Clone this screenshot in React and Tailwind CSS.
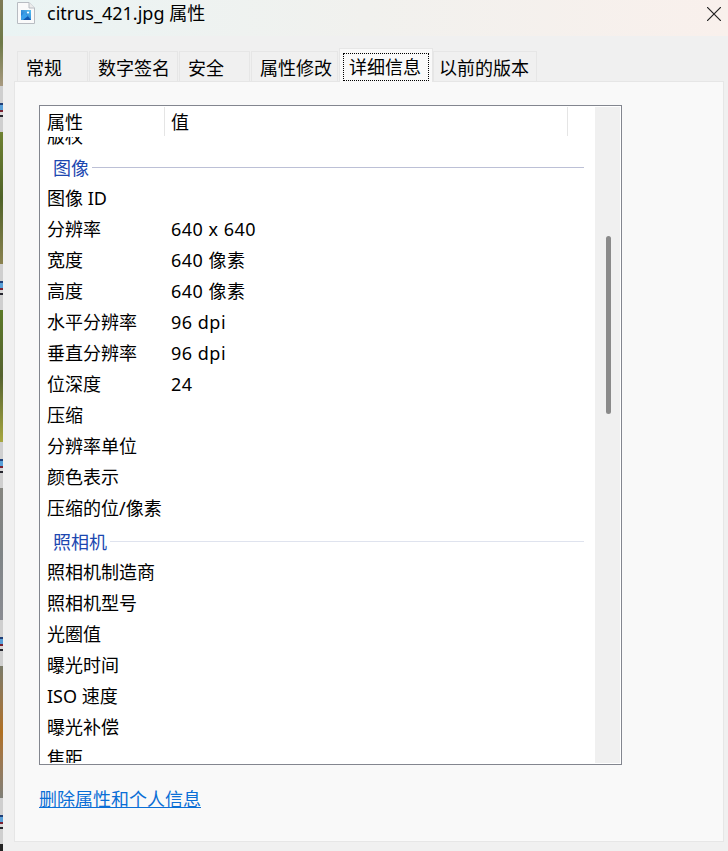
const rows1 = [
  ["图像 ID", ""],
  ["分辨率", "640 x 640"],
  ["宽度", "640 像素"],
  ["高度", "640 像素"],
  ["水平分辨率", "96 dpi"],
  ["垂直分辨率", "96 dpi"],
  ["位深度", "24"],
  ["压缩", ""],
  ["分辨率单位", ""],
  ["颜色表示", ""],
  ["压缩的位/像素", ""],
];
const rows2 = ["照相机制造商", "照相机型号", "光圈值", "曝光时间", "ISO 速度", "曝光补偿", "焦距"];
const tabs = [
  ["常规", "w-[71px]"],
  ["数字签名", "w-[89px]"],
  ["安全", "w-[71px]"],
  ["属性修改", "w-[87px]"],
];

function Row({ name, value }) {
  return (
    <div className="flex h-[31px] shrink-0 items-center pl-[6px]">
      <div className="w-[124px] shrink-0 whitespace-nowrap">{name}</div>
      <div className="whitespace-nowrap tracking-[0.5px]">{value}</div>
    </div>
  );
}

function Group({ title, line }) {
  return (
    <div className="flex h-[31px] shrink-0 items-center pl-[12px] pr-[11px] pt-[2px]">
      <span className="text-[#1c47b0]">{title}</span>
      <div className={`ml-[3px] h-px flex-1 ${line}`} />
    </div>
  );
}

function Gap() {
  return (
    <div className="flex h-[46px] flex-col items-stretch bg-[#cfcfcf] pt-[17px]">
      <div className="h-[2px] bg-[#1f3f78]" />
      <div className="h-[5px] bg-[#5aa0d8]" />
      <div className="h-[2px] bg-[#7a2030]" />
      <div className="h-[3px] bg-[#d8d8d8]" />
      <div className="h-[2px] bg-[#26262e]" />
    </div>
  );
}

function Strip() {
  return (
    <div className="flex h-[851px] w-[3px] shrink-0 flex-col">
      <div className="h-[86px] bg-gradient-to-b from-[#7f7a56] via-[#6e7a48] to-[#a89a80]" />
      <Gap />
      <div className="h-[132px] bg-gradient-to-b from-[#6f8232] via-[#4f6228] to-[#8a8250]" />
      <Gap />
      <div className="h-[132px] bg-gradient-to-b from-[#5c7a28] via-[#55622f] to-[#a8a840]" />
      <Gap />
      <div className="h-[132px] bg-gradient-to-b from-[#85857f] via-[#7f8486] to-[#8a8c92]" />
      <Gap />
      <div className="h-[132px] bg-gradient-to-b from-[#7a7a68] via-[#b07020] to-[#7f7f78]" />
      <Gap />
      <div className="flex-1 bg-[#222222]" />
    </div>
  );
}

export default function App() {
  return (
    <div
      className="flex h-[851px] w-[728px] overflow-hidden bg-[#f0f0f0] text-[18px] leading-[24px] text-black"
      style={{ fontFamily: '"Noto Sans", "Noto Sans CJK SC", sans-serif' }}
    >
      <Strip />
      <div className="flex min-w-0 flex-1 flex-col">
        <div className="flex h-[36px] shrink-0 items-center bg-gradient-to-r from-[#eaf4f4] via-[#f1f1ee] to-[#f9f0ec] pl-[14px] pr-[7px]">
          <svg width="18" height="22" viewBox="0 0 18 22" className="-mt-[11px] shrink-0">
            <defs>
              <linearGradient id="pic" x1="0" y1="1" x2="1" y2="0">
                <stop offset="0" stopColor="#1565c8" />
                <stop offset="1" stopColor="#58c0f0" />
              </linearGradient>
            </defs>
            <path d="M.5.5H12L17.5 6V21.5H.5Z" fill="#fafafa" stroke="#b8bcc2" />
            <path d="M12 .5V6H17.5" fill="#ececec" stroke="#b8bcc2" />
            <rect x="4" y="8" width="10" height="10" fill="url(#pic)" />
            <path d="M4 18L9 12L14 18Z" fill="#0f57b0" />
            <path d="M4 14L7.5 10.5L11 14L6 18H4Z" fill="#3aa0ea" />
            <circle cx="11" cy="10.5" r="1.1" fill="#ffffff" />
          </svg>
          <span className="ml-[12px] -mt-[10px] flex-1 whitespace-nowrap">citrus_421.jpg 属性</span>
          <svg width="14" height="14" viewBox="0 0 14 14" className="-mt-[8px] shrink-0" stroke="#222222" strokeWidth="1.2">
            <path d="M0 0L14 14M14 0L0 14" />
          </svg>
        </div>

        <div className="flex h-[15px] shrink-0" />
        <div className="relative z-10 flex h-[30px] shrink-0 pl-[14px]">
          {tabs.map(([t, w]) => (
            <div
              key={t}
              className={`${w} mr-px flex h-[30px] items-center border border-b-0 border-[#e6e6e6] bg-[#f0f0f0] pl-[8px] pt-[3px]`}
            >
              {t}
            </div>
          ))}
          <div className="-mt-[3px] -mb-px flex h-[34px] w-[94px] items-center border border-b-0 border-[#e6e6e6] bg-[#f9f9f9] px-[3px] pt-[3px]">
            <div className="flex h-[28px] flex-1 items-center border border-dotted border-black pl-[5px]">
              详细信息
            </div>
          </div>
          <div className="flex h-[30px] w-[104px] items-center border border-b-0 border-[#e6e6e6] bg-[#f0f0f0] pl-[5px] pt-[3px]">
            以前的版本
          </div>
        </div>

        <div className="ml-[11px] mb-[9px] mr-[4px] flex min-h-0 flex-1 flex-col border border-[#e6e6e6] bg-[#f9f9f9] pl-[24px] pt-[23px]">
          <div className="flex h-[660px] w-[583px] shrink-0 overflow-hidden border border-[#83868f] bg-white p-px">
            <div className="relative min-w-0 flex-1 overflow-hidden">
              <div className="absolute inset-x-0 top-0 z-10 flex h-[30px] bg-white pl-[5px]">
                <div className="flex h-[29px] w-[119px] items-center border-r border-[#e5e5e5] pl-px">属性</div>
                <div className="flex h-[29px] w-[403px] items-center border-r border-[#e5e5e5] pl-[6px]">值</div>
              </div>
              <div className="mt-[13px] flex flex-col">
                <Row name="版权" value="" />
                <Group title="图像" line="bg-[#bcc0d6]" />
                {rows1.map(([n, v]) => (
                  <Row key={n} name={n} value={v} />
                ))}
                <div className="h-[2px]" />
                <Group title="照相机" line="bg-[#dfe3ee]" />
                {rows2.map((n) => (
                  <Row key={n} name={n} value="" />
                ))}
              </div>
            </div>
            <div className="flex w-[25px] shrink-0 justify-center bg-[#f0f0f0] pl-px pt-[129px]">
              <div className="h-[178px] w-[5px] rounded-sm bg-[#8a8a8a]" />
            </div>
          </div>
          <a className="mt-[22px] self-start text-[#0b6fd6] underline">删除属性和个人信息</a>
        </div>
      </div>
    </div>
  );
}
